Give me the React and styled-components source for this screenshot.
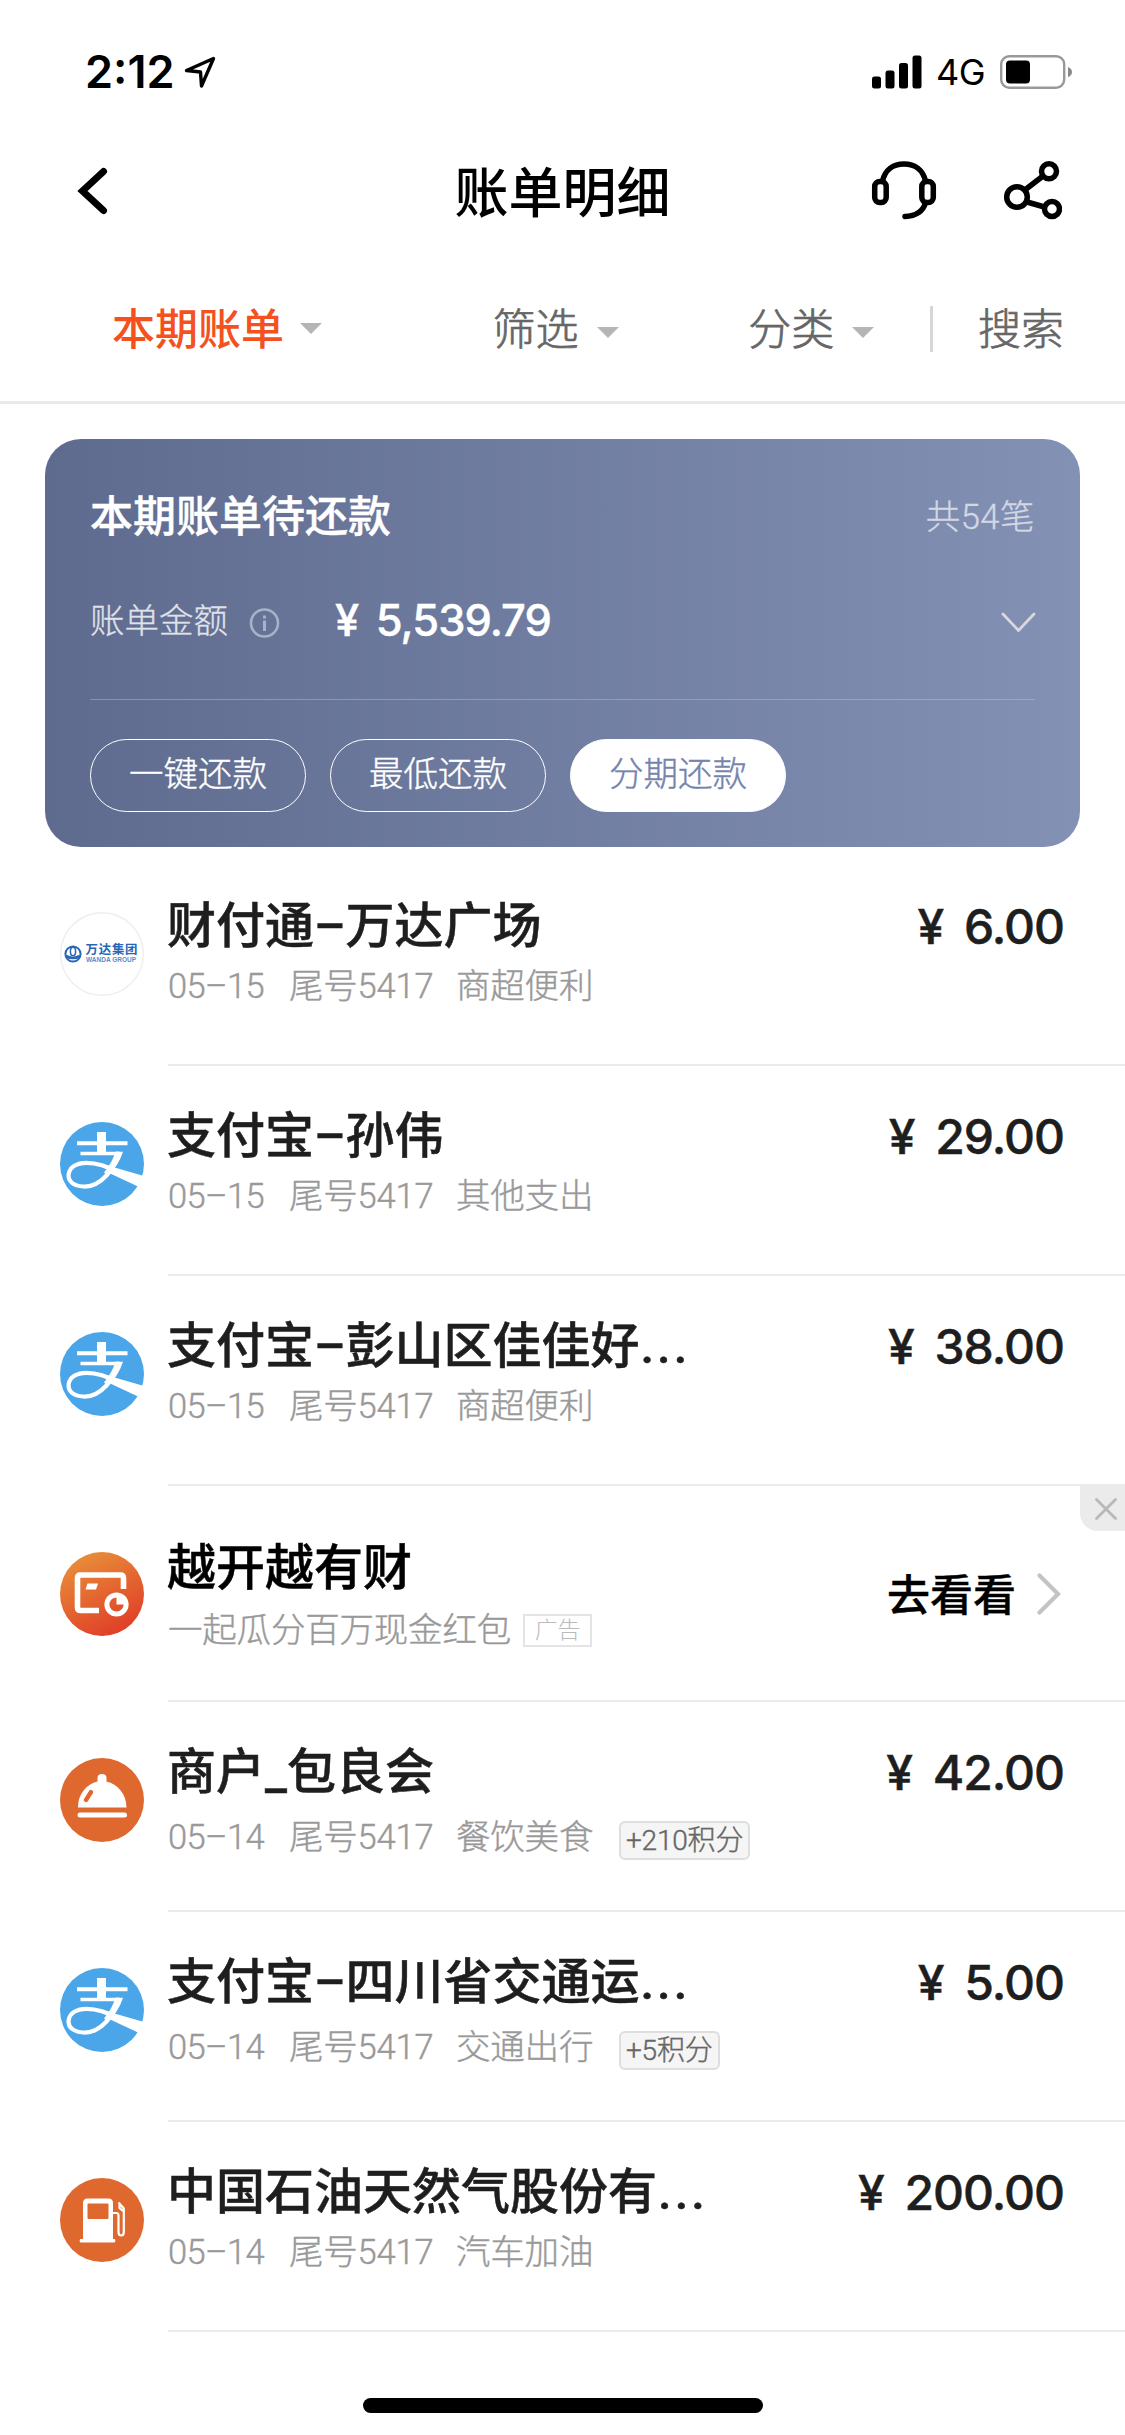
import React from "react";
import styled, { createGlobalStyle } from "styled-components";

const GlobalStyle = createGlobalStyle`
	body {
		margin: 0;
		background: #fff;
	}
	* {
		box-sizing: border-box;
	}
`

const Screen = styled.div`
	display: flex;
	flex-direction: column;
	width: 1125px;
	height: 2435px;
	overflow: hidden;
	background: #fff;
	color: #1e1e1e;
	font-family: Roboto, "Noto Sans CJK SC", sans-serif;
	line-height: 1.2;
	white-space: nowrap;
`

const StatusBar = styled.div`
	display: flex;
	align-items: center;
	height: 143px;
	padding: 0 53px 0 85px;
	color: #000;
	font-family: Inter, sans-serif;
`

const Time = styled.span`
	font-size: 45px;
	font-weight: 600;
	letter-spacing: 0;
	width: 99px;
`

const Network = styled.span`
	font-size: 36px;
	letter-spacing: -0.6px;
	width: 64px;
	margin-left: 14px;
	padding-top: 3px;
`

const Signal = styled.svg`
	margin-left: auto;
`

const NavBar = styled.div`
	display: grid;
	grid-template-columns: 375px 375px 375px;
	align-items: center;
	height: 96px;
	color: #000;
`

const BackButton = styled.div`
	padding-left: 76px;
	line-height: 0;
`

const PageTitle = styled.div`
	padding-top: 7px;
	text-align: center;
	font-size: 54px;
	line-height: 72px;
	font-weight: 500;
`

const NavActions = styled.div`
	display: flex;
	justify-content: flex-end;
	gap: 65px;
	padding: 0 63px 2px 0;
`

const FilterBar = styled.div`
	display: flex;
	align-items: center;
	height: 165px;
	padding: 21px 61px 0 112px;
	border-bottom: 3px solid #e9e9e9;
	font-size: 43px;
`

const FilterItem = styled.div`
	display: flex;
	align-items: center;
	width: ${p => p.$width}px;
	color: ${p => (p.$active ? "#f4511e" : "#666")};
	font-weight: ${p => (p.$active ? 500 : 300)};
	-webkit-text-stroke: ${p => (p.$active ? 0 : 0.7)}px;
`

const Caret = styled.i`
	margin-left: ${p => (p.$active ? 16 : 18)}px;
	margin-top: ${p => (p.$active ? -4 : 4)}px;
	border: 11px solid transparent;
	border-top-color: #b5b5b5;
	border-bottom: 0;
`

const Divider = styled.i`
	width: 3px;
	height: 46px;
	margin-top: -4px;
	margin-right: 45px;
	background: #d6d6d6;
`

const SummaryCard = styled.div`
	height: 408px;
	margin: 35px 45px 8px;
	padding: 44px 45px 0;
	border-radius: 36px;
	background: linear-gradient(90deg, #5e6b8e, #8391b5);
	color: #fff;
`

const CardRow = styled.div`
	display: flex;
	align-items: center;
	height: ${p => p.$height}px;
`

const CardTitle = styled.div`
	flex: 1;
	font-size: 43px;
	font-weight: 500;
	-webkit-text-stroke: 0.4px;
`

const CardCount = styled.div`
	font-size: 34.5px;
	font-weight: 300;
	letter-spacing: 0.5px;
	opacity: 0.65;
	-webkit-text-stroke: 0.3px;
`

const CardLabel = styled.div`
	width: 159px;
	font-size: 34.5px;
	font-weight: 300;
	opacity: 0.8;
	-webkit-text-stroke: 0.3px;
`

const CardAmount = styled.div`
	flex: 1;
	margin-left: 54px;
	padding-bottom: 3px;
	font-family: Inter, sans-serif;
	font-size: 43.5px;
	font-weight: 500;
	letter-spacing: -1px;
	word-spacing: 7px;
	-webkit-text-stroke: 0.4px;
`

const CardChevron = styled.svg`
	margin-right: -1px;
`

const CardActions = styled.div`
	display: flex;
	gap: 24px;
	margin-top: 8px;
	padding-top: 39px;
	border-top: 1px solid rgba(190, 205, 215, 0.4);
`

const PillButton = styled.div`
	width: 216px;
	height: 73px;
	border: 1.5px solid #fff;
	border-radius: 37px;
	background: ${p => (p.$filled ? "#fff" : "transparent")};
	color: ${p => (p.$filled ? "#7583ad" : "#fff")};
	font-size: 34.5px;
	font-weight: 300;
	line-height: 69px;
	text-align: center;
	-webkit-text-stroke: 0.4px;
`

const Row = styled.div`
	position: relative;
	display: flex;
	height: ${p => p.$height || 210}px;
	padding: ${p => p.$top || 57}px 0 0 60px;

	&:after {
		content: "";
		position: absolute;
		left: 168px;
		right: 0;
		bottom: -1px;
		height: 2px;
		background: #ebebeb;
	}
`

const RowBody = styled.div`
	flex: 1;
	margin: -16px 0 0 23px;
`

const RowTitle = styled.div`
	height: 62px;
	font-size: 49px;
	font-weight: 500;
	line-height: ${p => (p.$dark ? 66 : 62)}px;
	color: ${p => (p.$dark ? "#000" : "#1e1e1e")};
	-webkit-text-stroke: 0.5px;
`

const Dots = styled.span`
	margin-left: 1px;
	letter-spacing: 3px;
`

const Meta = styled.div`
	display: flex;
	align-items: center;
	height: 40px;
	margin-top: ${p => p.$gap}px;
	padding-left: 1px;
	color: #999;
	font-size: 34.5px;
	font-weight: 300;
	letter-spacing: -0.2px;
	line-height: 40px;
	-webkit-text-stroke: 0.4px;
`

const MetaItem = styled.span`
	width: ${p => p.$width}px;
	letter-spacing: ${p => p.$spacing || -0.2}px;
`

const PointsTag = styled.span`
	height: 39px;
	margin-top: 7px;
	padding: 0 5px;
	border: 2px solid #dedede;
	border-radius: 6px;
	background: #f5f5f5;
	color: #666;
	font-size: 28px;
	line-height: 36px;
`

const AdTag = styled.span`
	width: 69px;
	height: 33px;
	margin-left: 12px;
	border: 2px solid #e4e4e4;
	color: #bbb;
	font-size: 23px;
	line-height: 30px;
	text-align: center;
	-webkit-text-stroke: 0;
`

const Amount = styled.div`
	height: 62px;
	margin-top: -16px;
	padding-right: 61px;
	font-family: Inter, sans-serif;
	font-size: 48px;
	font-weight: 500;
	letter-spacing: -1px;
	word-spacing: 9px;
	line-height: 62px;
	-webkit-text-stroke: 0.5px;
`

const AdLink = styled.div`
	display: flex;
	align-items: center;
	height: 62px;
	margin-top: 14px;
	padding-right: 64px;
	gap: 21px;
	color: #000;
	font-size: 43px;
	font-weight: 500;
	-webkit-text-stroke: 0.4px;

	svg {
		margin-bottom: 6px;
	}
`

const CloseBadge = styled.div`
	position: absolute;
	top: 1px;
	right: 0;
	display: flex;
	align-items: center;
	justify-content: center;
	width: 45px;
	height: 45px;
	padding-left: 6px;
	border-bottom-left-radius: 18px;
	background: #ebebeb;
`

const HomeIndicator = styled.div`
	width: 400px;
	height: 15px;
	margin: 67px auto 0;
	border-radius: 8px;
	background: #000;
`

const LogoSvg = styled.svg`
	flex: none;
	width: 84px;
	height: 84px;
`

function WandaLogo(){
	return(
		<LogoSvg viewBox="0 0 84 84">
			<circle cx="42" cy="42" r="41.3" fill="#fff" stroke="#eee" strokeWidth="1.4" />
			<g fill="none" stroke="#2a66b5" strokeWidth="2">
				<circle cx="13" cy="42" r="7.6" />
				<path d="M6 44 Q13 48 20 44" strokeWidth="2.6" />
				<ellipse cx="13" cy="39.5" rx="2.6" ry="4.2" strokeWidth="1.5" />
			</g>
			<text x="25.5" y="42" fill="#2a66b5" fontSize="12.4" fontWeight="700" fontFamily="Noto Sans CJK SC, sans-serif" textLength="52">万达集团</text>
			<text x="26" y="49.5" fill="#5d8cc8" fontSize="6.8" fontWeight="700" fontFamily="Liberation Sans, sans-serif" textLength="50" lengthAdjust="spacingAndGlyphs">WANDA GROUP</text>
		</LogoSvg>
	);
}

function AlipayLogo(){
	return(
		<LogoSvg viewBox="0 0 84 84">
			<circle cx="42" cy="42" r="42" fill="#4aa6e9" />
			<g fill="none" stroke="#fff">
				<path d="M17 21.3H67.5" strokeWidth="4" />
				<path d="M41.5 10V31" strokeWidth="9" />
				<path d="M20.5 31.5H60" strokeWidth="3.6" />
				<path d="M58.8 30C56.5 39 52 47.5 46.5 53.5C38 62.5 31 65 23.5 64.5C13 64 8 59 8.6 52.5C9.5 45 17 40.8 26.5 40.8C38 40.8 47 45 57 49.5" strokeWidth="4.2" />
			</g>
			<path d="M63 29.7L55.5 29.7C53 37 49.5 44 44 50.5L48 54C55 47 60 39 63 29.7Z" fill="#fff" />
			<path d="M46 43L83 53.8L78 64.5L47 50Z" fill="#fff" />
		</LogoSvg>
	);
}

function WealthLogo(){
	return(
		<LogoSvg viewBox="0 0 84 84">
			<defs>
				<linearGradient id="wealth" x1="0.25" y1="0" x2="0.75" y2="1">
					<stop offset="0" stopColor="#e8903a" />
					<stop offset="1" stopColor="#e03a26" />
				</linearGradient>
			</defs>
			<circle cx="42" cy="42" r="42" fill="url(#wealth)" />
			<path d="M63.5 37V26Q63.5 23 60.5 23H20.5Q17.5 23 17.5 26V55.5Q17.5 58.5 20.5 58.5H39" fill="none" stroke="#fff" strokeWidth="5.6" />
			<path d="M27.5 31.5H38L36 37.5H25.5Z" fill="#fff" />
			<circle cx="56.5" cy="52.5" r="9.6" fill="none" stroke="#fff" strokeWidth="5" />
			<path d="M56.5 45V52.5H64V45Z" fill="#fff" />
		</LogoSvg>
	);
}

function FoodLogo(){
	return(
		<LogoSvg viewBox="0 0 84 84">
			<circle cx="42" cy="42" r="42" fill="#df682f" />
			<path d="M18 49.5C18 36 26.5 26 37.5 23.5V20Q37.5 16 42 16Q46.5 16 46.5 20V23.5C57.5 26 66.5 36 66.5 49.5Z" fill="#fff" />
			<path d="M26 42L31 34" stroke="#df682f" strokeWidth="4.4" strokeLinecap="round" />
			<path d="M20 57H64.5" stroke="#fff" strokeWidth="5" strokeLinecap="round" />
		</LogoSvg>
	);
}

function FuelLogo(){
	return(
		<LogoSvg viewBox="0 0 84 84">
			<circle cx="42" cy="42" r="42" fill="#df682f" />
			<path d="M23 61V25Q23 20.5 27.5 20.5H48.5Q53 20.5 53 25V61H55Q56 64.5 54 64.5H21Q19 64.5 20 61Z" fill="#fff" />
			<rect x="27.5" y="25.5" width="21" height="15.5" rx="1" fill="#df682f" />
			<path d="M53 35H56.5Q58.5 35 58.5 37.5V54Q58.5 57.5 61.2 57.5Q63.8 57.5 63.8 54V30.5L58.5 24.5M59.5 25V30L63 33" fill="none" stroke="#fff" strokeWidth="2.2" />
		</LogoSvg>
	);
}

const logos = {
	wanda: WandaLogo,
	alipay: AlipayLogo,
	food: FoodLogo,
	fuel: FuelLogo,
}

function BillRow({ logo, title, cut, date, category, points, amount }){
	const Logo = logos[logo];
	return(
		<Row>
			<Logo />
			<RowBody>
				<RowTitle>{title}{cut && <Dots>...</Dots>}</RowTitle>
				<Meta $gap={points ? 13 : 8}>
					<MetaItem $width={121} $spacing={-0.6}>{date}</MetaItem>
					<MetaItem $width={167}>尾号5417</MetaItem>
					<MetaItem $width={163}>{category}</MetaItem>
					{points && <PointsTag>{points}</PointsTag>}
				</Meta>
			</RowBody>
			<Amount>{amount}</Amount>
		</Row>
	);
}

function App(){
	return(
		<Screen>
			<GlobalStyle />

			<StatusBar>
				<Time>2:12</Time>
				<svg width="32" height="34" viewBox="0 0 32 34" fill="none" stroke="#000" strokeWidth="3.4" strokeLinejoin="round">
					<path d="M29.5 3.5L2.5 15.5L16.5 17L17.5 31Z" />
				</svg>
				<Signal width="50" height="34" viewBox="0 0 50 34">
					<rect x="0" y="21.5" width="9" height="12" rx="2.5" />
					<rect x="13.5" y="15.5" width="9" height="18" rx="2.5" />
					<rect x="27" y="8" width="9" height="25.5" rx="2.5" />
					<rect x="40.5" y="0.5" width="9" height="33" rx="2.5" />
				</Signal>
				<Network>4G</Network>
				<svg width="72" height="34" viewBox="0 0 72 34">
					<rect x="1.2" y="1.2" width="63" height="31.6" rx="8" fill="none" stroke="#999" strokeWidth="2.4" />
					<rect x="6" y="5.5" width="24" height="23" rx="4" />
					<path d="M68 12Q72 13.5 72 17T68 22Z" fill="#8a8a8a" />
				</svg>
			</StatusBar>

			<NavBar>
				<BackButton>
					<svg width="34" height="50" viewBox="0 0 34 50" fill="none" stroke="#000" strokeWidth="7" strokeLinecap="round">
						<path d="M27.5 5.5L6.5 25L27.5 44.5" />
					</svg>
				</BackButton>
				<PageTitle>账单明细</PageTitle>
				<NavActions>
					<svg width="66" height="60" viewBox="0 0 66 60" fill="none" stroke="#000" strokeWidth="5.5" strokeLinecap="round">
						<rect x="3.7" y="21.5" width="11.5" height="21" rx="5" />
						<rect x="50.8" y="21.5" width="11.5" height="21" rx="5" />
						<path d="M11.5 21C14 10 22 4 33 4S52 10 54.5 21" />
						<path d="M54.5 43C52 51 45 56 34 56.5" />
					</svg>
					<svg width="60" height="60" viewBox="0 0 60 60" fill="none" stroke="#000" strokeWidth="5.5">
						<circle cx="15" cy="37" r="10.3" />
						<circle cx="47" cy="11.3" r="7.5" />
						<circle cx="50" cy="49" r="7.5" />
						<path d="M23.5 29.5L41 16M25 42L42.5 47" />
					</svg>
				</NavActions>
			</NavBar>

			<FilterBar>
				<FilterItem $width={381} $active>本期账单<Caret $active /></FilterItem>
				<FilterItem $width={256}>筛选<Caret /></FilterItem>
				<FilterItem $width={182}>分类<Caret /></FilterItem>
				<Divider />
				<FilterItem>搜索</FilterItem>
			</FilterBar>

			<SummaryCard>
				<CardRow $height={70}>
					<CardTitle>本期账单待还款</CardTitle>
					<CardCount>共54笔</CardCount>
				</CardRow>
				<CardRow $height={138}>
					<CardLabel>账单金额</CardLabel>
					<svg width="32" height="32" viewBox="0 0 32 32" fill="none" stroke="#a9b1c8" strokeWidth="2.6">
						<circle cx="15.5" cy="17" r="13.5" />
						<path d="M15.5 14.5V25M15.5 9.5V12.5" strokeWidth="3" />
					</svg>
					<CardAmount>¥ 5,539.79</CardAmount>
					<CardChevron width="36" height="24" viewBox="0 0 36 24" fill="none" stroke="#d8d8dc" strokeWidth="2.8" strokeLinecap="round">
						<path d="M3 4L18.5 20.5L34 4" />
					</CardChevron>
				</CardRow>
				<CardActions>
					<PillButton>一键还款</PillButton>
					<PillButton>最低还款</PillButton>
					<PillButton $filled>分期还款</PillButton>
				</CardActions>
			</SummaryCard>

			<BillRow logo="wanda" title="财付通–万达广场" date="05–15" category="商超便利" amount="¥ 6.00" />
			<BillRow logo="alipay" title="支付宝–孙伟" date="05–15" category="其他支出" amount="¥ 29.00" />
			<BillRow logo="alipay" title="支付宝–彭山区佳佳好" cut date="05–15" category="商超便利" amount="¥ 38.00" />

			<Row $height={216} $top={67}>
				<WealthLogo />
				<RowBody>
					<RowTitle $dark>越开越有财</RowTitle>
					<Meta $gap={12}>
						一起瓜分百万现金红包
						<AdTag>广告</AdTag>
					</Meta>
				</RowBody>
				<AdLink>
					去看看
					<svg width="24" height="42" viewBox="0 0 24 42" fill="none" stroke="#c4c4c4" strokeWidth="4.2" strokeLinecap="round">
						<path d="M2.5 2.5L21 21L2.5 39.5" />
					</svg>
				</AdLink>
				<CloseBadge>
					<svg width="22" height="22" viewBox="0 0 22 22" stroke="#b8b8b8" strokeWidth="2.8" strokeLinecap="round">
						<path d="M1.5 1.5L20.5 20.5M20.5 1.5L1.5 20.5" />
					</svg>
				</CloseBadge>
			</Row>

			<BillRow logo="food" title="商户_包良会" date="05–14" category="餐饮美食" points="+210积分" amount="¥ 42.00" />
			<BillRow logo="alipay" title="支付宝–四川省交通运" cut date="05–14" category="交通出行" points="+5积分" amount="¥ 5.00" />
			<BillRow logo="fuel" title="中国石油天然气股份有" cut date="05–14" category="汽车加油" amount="¥ 200.00" />

			<HomeIndicator />
		</Screen>
	);
}

export default App;
